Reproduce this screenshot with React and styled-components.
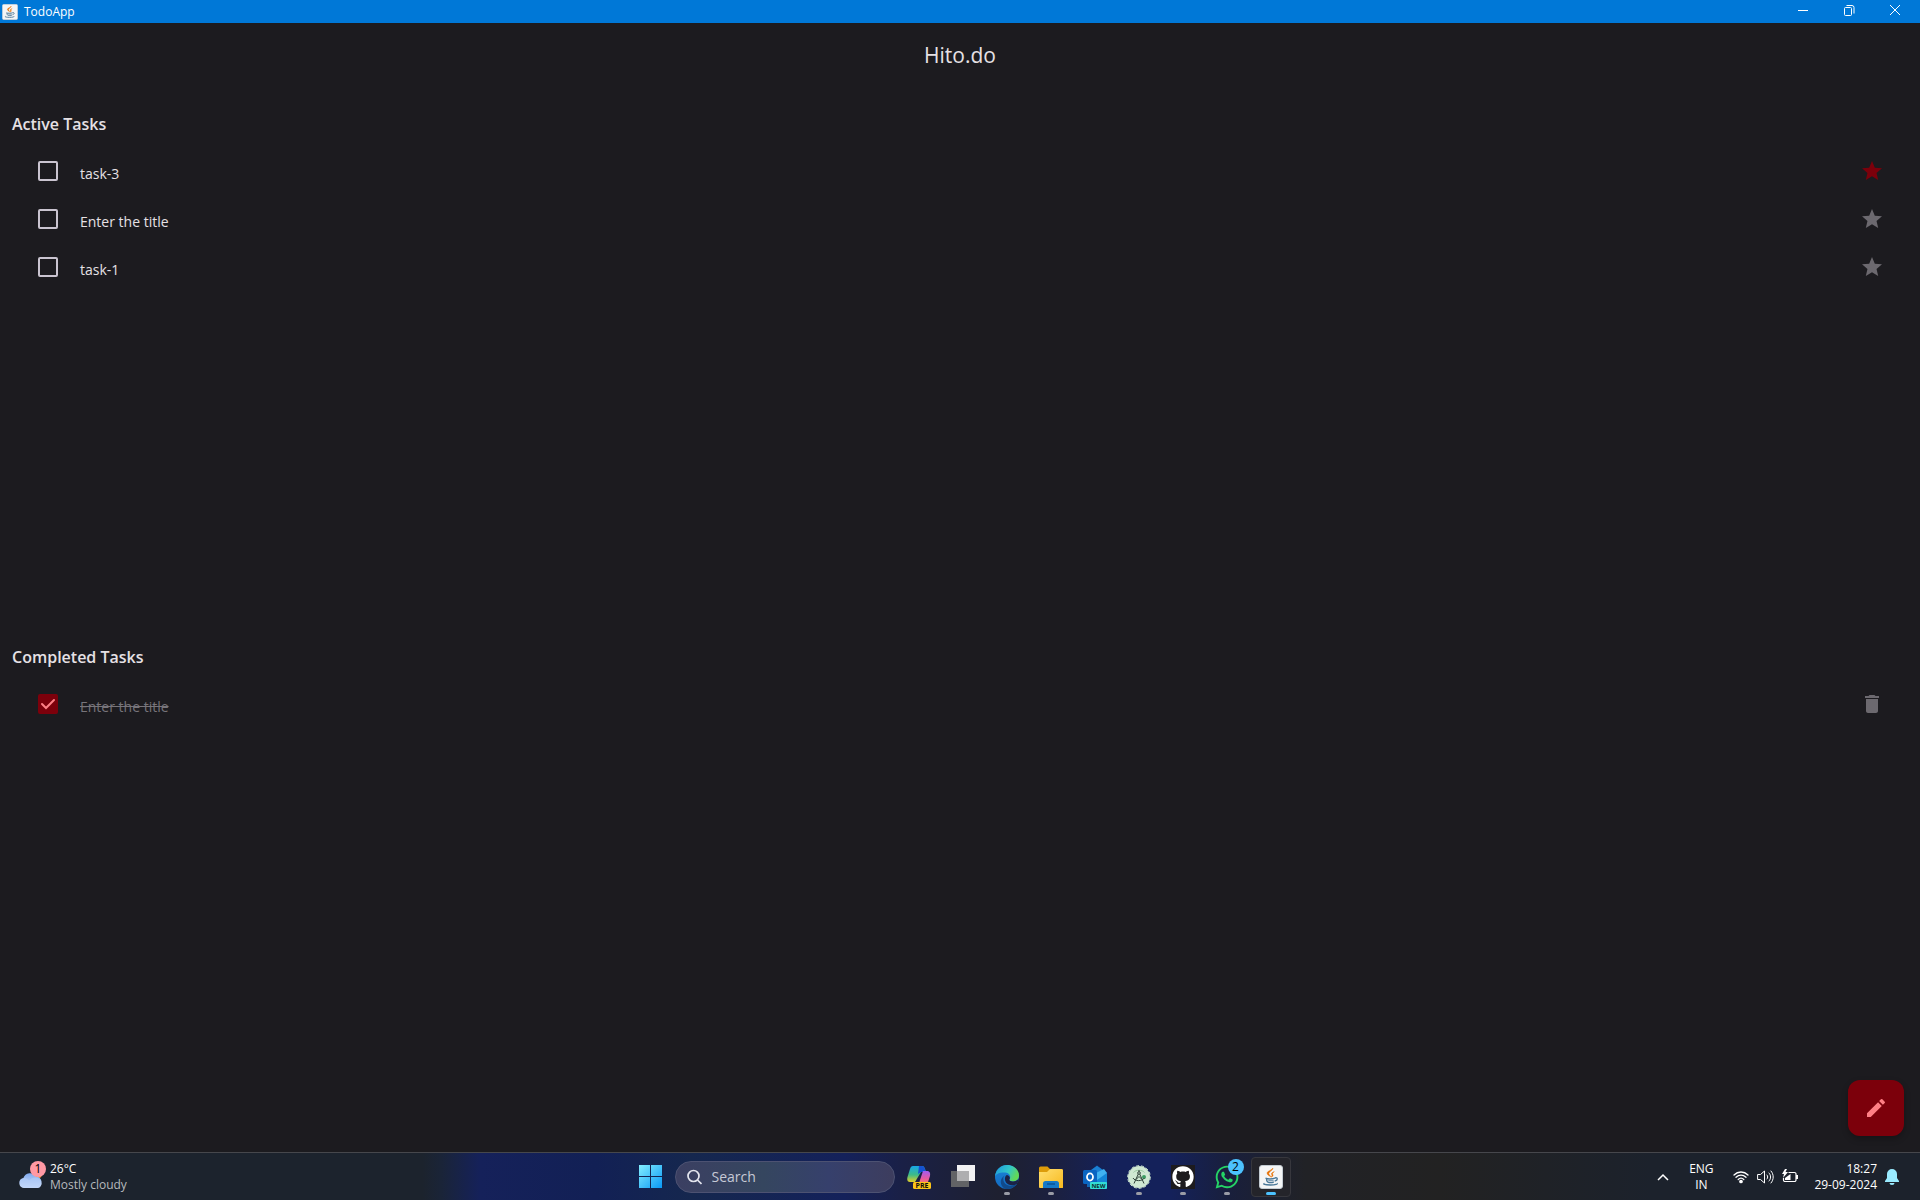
import { useState } from "react";
import styled, { createGlobalStyle } from "styled-components";
import { MdStar, MdDelete, MdEdit } from "react-icons/md";
import { FaGithub, FaWhatsapp } from "react-icons/fa";

const GlobalStyle = createGlobalStyle`
  * {
    box-sizing: border-box;
  }
  body {
    margin: 0;
    background: #1c1b1f;
    color: #e6e1e5;
    font-family: "Open Sans", "Noto Sans", sans-serif;
  }
  button {
    padding: 0;
    border: 0;
    background: none;
    color: inherit;
    font: inherit;
  }
  svg {
    display: block;
  }
`;
const Desktop = styled.div`
  min-height: 100vh;
  display: flex;
  flex-direction: column;
`;
const TitleBar = styled.header`
  height: 23px;
  padding: 0 2px;
  display: flex;
  align-items: center;
  background: #0078d7;
  color: white;
  font-size: 12px;
`;
const WindowName = styled.span`
  flex: 1;
  margin-left: 6px;
`;
const WindowButton = styled.button`
  width: 46px;
  height: 20px;
  display: flex;
  align-items: center;
  justify-content: center;
  align-self: flex-start;
`;
const AppBody = styled.main`
  position: relative;
  flex: 1;
  display: flex;
  flex-direction: column;
`;
const AppName = styled.h1`
  margin: 0;
  height: 64px;
  line-height: 64px;
  text-align: center;
  font-size: 21px;
  font-weight: 400;
`;
const Section = styled.section`
  flex: 1 1 0px;
`;
const SectionName = styled.h2`
  margin: 0;
  padding: 25px 12px 11px;
  font-size: 16px;
  line-height: 24px;
  font-weight: 600;
`;
const TaskList = styled.ul`
  margin: 0;
  padding: 0 24px;
  list-style: none;
`;
const TaskRow = styled.li`
  height: 48px;
  display: flex;
  align-items: center;
`;
const CheckArea = styled.span`
  width: 48px;
  height: 48px;
  display: grid;
  place-items: center;

  & > * {
    grid-area: 1 / 1;
  }
`;
const CheckBox = styled.input`
  appearance: none;
  width: 20px;
  height: 20px;
  margin: 0;
  border: 2px solid #cac4d0;
  border-radius: 2px;

  &:checked {
    border-color: #7c000b;
    background: #7c000b;
  }
`;
const CheckMark = styled.svg`
  pointer-events: none;
  z-index: 1;
`;
const TaskName = styled.label`
  flex: 1;
  padding: 6px 0 0 8px;
  font-size: 14px;
  line-height: 20px;
  color: ${(props) => (props.$done ? "#77747a" : "#e6e1e5")};
  text-decoration: ${(props) => (props.$done ? "line-through" : "none")};
`;
const IconButton = styled.button`
  width: 48px;
  height: 48px;
  display: grid;
  place-items: center;
  font-size: 24px;
  color: ${(props) => (props.$on ? "#7c000b" : "#6c696f")};
`;
const AddButton = styled.button`
  position: absolute;
  right: 16px;
  bottom: 16px;
  width: 56px;
  height: 56px;
  display: grid;
  place-items: center;
  border-radius: 12px;
  background: #7c000b;
  color: #ff7f85;
  font-size: 24px;
  box-shadow: 0 3px 6px rgba(0, 0, 0, 0.25);
`;

const TaskBar = styled.footer`
  height: 48px;
  display: grid;
  grid-template-columns: 1fr auto 1fr;
  align-items: center;
  border-top: 1px solid #46474c;
  background: linear-gradient(
    90deg,
    #1c232d 0%,
    #1c232d 22%,
    #1a2438 23%,
    #15215a 25%,
    #122055 31%,
    #15274e 36%,
    #14215a 44%,
    #1a2046 47%,
    #1e2030 52%,
    #1b2040 55%,
    #14215a 58%,
    #14215a 61%,
    #191f3c 64%,
    #212226 68%,
    #222222 75%,
    #1c222c 86%,
    #1c222c 100%
  );
`;
const Weather = styled.button`
  justify-self: start;
  margin-left: 16px;
  display: flex;
  gap: 2px;
  text-align: left;
  font-size: 12px;
  line-height: 16px;
`;
const WeatherText = styled.span`
  display: flex;
  flex-direction: column;
  color: white;

  small {
    font-size: 12px;
    color: #b6b9bd;
  }
`;
const Apps = styled.nav`
  display: flex;
  align-items: center;
`;
const AppButton = styled.button`
  position: relative;
  width: 44px;
  height: 47px;
  display: grid;
  place-items: center;
`;
const ActiveFrame = styled.span`
  width: 40px;
  height: 40px;
  display: grid;
  place-items: center;
  border: 1px solid #37373d;
  border-radius: 4px;
  background: #24242a;
`;
const Indicator = styled.span`
  position: absolute;
  bottom: 5px;
  left: 50%;
  width: ${(props) => (props.$active ? "10px" : "6px")};
  height: 3px;
  border-radius: 2px;
  background: ${(props) => (props.$active ? "#4cc2ff" : "#9a9ca6")};
  transform: translateX(-50%);
`;
const Badge = styled.span`
  position: absolute;
  top: 6px;
  right: 5px;
  width: 16px;
  height: 16px;
  border-radius: 50%;
  background: #4cc2ff;
  color: black;
  font-size: 12px;
  line-height: 16px;
  text-align: center;
`;
const GithubTile = styled.span`
  width: 24px;
  height: 24px;
  display: grid;
  place-items: center;
  background: #1d1b1e;
  color: white;
  font-size: 22px;
`;
const SearchBox = styled.label`
  width: 220px;
  height: 32px;
  margin: 0 2px 0 3px;
  padding: 0 11px;
  display: flex;
  align-items: center;
  gap: 10px;
  border: 1px solid #4d5272;
  border-radius: 16px;
  background: linear-gradient(90deg, #3b3f62, #35465f 40%, #36406c 70%, #3d3d5e);
`;
const SearchInput = styled.input`
  flex: 1;
  min-width: 0;
  padding: 0;
  border: 0;
  outline: 0;
  background: none;
  font: inherit;
  font-size: 14px;
  color: white;

  &::placeholder {
    color: #c6c9d6;
    opacity: 1;
  }
`;
const Tray = styled.div`
  justify-self: end;
  display: flex;
  align-items: center;
  padding-right: 21px;
  color: white;
  font-size: 12px;
  line-height: 16px;
`;
const Language = styled.button`
  width: 24px;
  margin: 0 20px;
  display: flex;
  flex-direction: column;
  align-items: center;
`;
const StatusIcons = styled.button`
  display: flex;
  align-items: center;
  gap: 8px;
`;
const Clock = styled.button`
  margin: 0 8px 0 16px;
  display: flex;
  flex-direction: column;
  align-items: flex-end;
`;

const JavaIcon = ({ size }) => (
  <svg width={size} height={size} viewBox="0 0 24 24" fill="none">
    <rect x=".5" y=".5" width="23" height="23" rx="2.5" fill="#f4f5f6" stroke="#c3cbd2" />
    <path d="M13.8 3c.8 2-4.5 3.700-4 5.800.2 1 1.500 1.700 2 3-1.800-1.200-4-2.200-3.700-4 .3-1.900 5.200-2.700 5.700-4.800z" fill="#e76f00" stroke="#e76f00" strokeWidth=".5" />
    <path d="M15.3 6.600c-2.500 1-3.300 1.900-2.600 3 .6.900.3 1.700-.6 2.600 2.300-1 2.200-2 1.500-3-.4-.7.3-1.500 1.700-2.600z" fill="#e76f00" stroke="#e76f00" strokeWidth=".5" />
    <path d="M6.500 13.200c2 .9 7 .9 9.500-.1M7.500 13.500c0 1.800.4 2.600 1 3.300 1.700.8 4.700.8 6.300 0M16 13c2.600-.9 3.500 2-.3 3.100M5.500 18.300c-1.800.9 0 1.600 6 1.700 5 0 7.500-.9 6.300-1.700" stroke="#4b7898" strokeWidth="1.4" />
    <path d="M9.300 15.200h5.300" stroke="#4b7898" />
  </svg>
);

const WeatherIcon = () => (
  <svg width="32" height="32" viewBox="0 0 32 32">
    <defs>
      <linearGradient id="cloud" x2="0" y2="1">
        <stop offset="0" stopColor="#7fa9ee" />
        <stop offset="1" stopColor="#d5e4fb" />
      </linearGradient>
    </defs>
    <circle cx="21" cy="13" r="5" fill="#f58a1f" />
    <path d="M8 27a5 5 0 0 1-.6-9.900A7 7 0 0 1 20 15.500 6 6 0 0 1 22 27z" fill="url(#cloud)" />
    <path d="M8 27a5 5 0 0 1 0-9.900c2.400 0 4 1 5 2.600 2-2.700 5-3.700 8-3 6 2 5 10.300 1 10.300z" fill="#b4cdf6" opacity=".6" />
    <circle cx="22" cy="8" r="8" fill="#ff99a4" />
    <text x="22" y="12" textAnchor="middle" fontSize="12" fill="#000">1</text>
  </svg>
);

const StartIcon = () => (
  <svg width="24" height="24" viewBox="0 0 24 24">
    <defs>
      <linearGradient id="start" x2="24" y2="24" gradientUnits="userSpaceOnUse">
        <stop stopColor="#86f0ff" />
        <stop offset="1" stopColor="#0796f5" />
      </linearGradient>
    </defs>
    <path d="M1 0h11v11H1zM13 0h11v11H13zM1 12h11v11H1zM13 12h11v11H13z" fill="url(#start)" />
  </svg>
);

const CopilotIcon = () => (
  <svg width="26" height="26" viewBox="0 0 26 26">
    <defs>
      <linearGradient id="copilotA" x2="0" y2="1">
        <stop stopColor="#18a7e8" />
        <stop offset=".55" stopColor="#3dbb87" />
        <stop offset="1" stopColor="#e4cf27" />
      </linearGradient>
      <linearGradient id="copilotB" x2="0" y2="1">
        <stop stopColor="#a35bf0" />
        <stop offset=".6" stopColor="#e85a9d" />
        <stop offset="1" stopColor="#ff8b5b" />
      </linearGradient>
    </defs>
    <path d="M7 2h9c2 0 2.500 1.500 3 3l1 3h-5L9 18H4c-3 0-3-3-2.500-5L4 5c.5-2 1.500-3 3-3z" fill="url(#copilotA)" />
    <path d="M13 2h3c2 0 2.500 1.500 3 3l1 3h-5l-3 2z" fill="#1552d0" />
    <path d="M17 7h4c3 0 3.500 2.500 3 5l-2 6c-.6 1.500-2 2-3 2h-8c2 0 2.500-2 3-4z" fill="url(#copilotB)" />
    <rect x="7" y="18" width="18" height="7" rx="1.500" fill="#fcc419" />
    <text x="16" y="24" textAnchor="middle" fontSize="7" fontWeight="700" fill="#15120a">PRE</text>
  </svg>
);

const TaskViewIcon = () => (
  <svg width="24" height="24" viewBox="0 0 24 24">
    <path d="M6 0h18v16H6z" fill="#f2f2f3" />
    <path d="M0 6h18v16H0z" fill="#626366" />
    <path d="M6 6h12v10H6z" fill="#aeaeb0" />
  </svg>
);

const EdgeIcon = () => (
  <svg width="24" height="24" viewBox="0 0 24 24">
    <defs>
      <linearGradient id="edgeA" x2="1" y2=".4">
        <stop stopColor="#1c96df" />
        <stop offset=".6" stopColor="#32c6c8" />
        <stop offset="1" stopColor="#62d957" />
      </linearGradient>
      <linearGradient id="edgeB" x2="0" y2="1">
        <stop stopColor="#1b86d8" />
        <stop offset="1" stopColor="#1269c0" />
      </linearGradient>
    </defs>
    <circle cx="12" cy="12" r="12" fill="url(#edgeB)" />
    <path d="M0 11.500C.8 4.500 6 0 12 0c7 0 12 5 12 10.500 0 4-3 6-6 6-2.500 0-4-1-3.500-2.200 1.500-2 .8-6.300-4-6.800C5.500 7 1 8.500 0 11.500z" fill="url(#edgeA)" />
    <path d="M8.300 13.500c-.3 5 4.700 8.200 9.700 6.900 1.500-.4 2.900-1.200 4-1.700-2.500 4-7 6-12 5-4.500-2-6.300-9-.8-13-.6.900-.9 1.800-.9 2.800z" fill="#114a8b" />
    <path d="M14.500 14.300c-.5 1.200 1 2.200 3.500 2.200 2 0 4-.8 5.300-2.600l.3 1.100c-.3 1.500-.8 2.600-1.600 3.700-5 3.300-12.500 1-12-5.200 0-1.500.5-3 2-3.500 2.500.5 3.500 2.800 2.500 4.300z" fill="#1b2346" />
  </svg>
);

const FolderIcon = () => (
  <svg width="24" height="24" viewBox="0 0 24 24">
    <defs>
      <linearGradient id="folder" x2="1" y2="1">
        <stop stopColor="#ffdf70" />
        <stop offset="1" stopColor="#f8b91e" />
      </linearGradient>
    </defs>
    <path d="M0 3q0-1.500 1.500-1.500h7L11 4h11.500Q24 4 24 5.500V10H0z" fill="#dd9c0a" />
    <path d="M0 7h8l3-3h11.500Q24 4 24 5.500v17q0 .5-1 .5H1q-1 0-1-1z" fill="url(#folder)" />
    <path d="M4 23v-4.500Q4 16 6.500 16h11q2.500 0 2.500 2.500V23z" fill="#1679c7" />
    <path d="M8 19h8" stroke="#0c5495" strokeWidth="1.500" />
  </svg>
);

const OutlookIcon = () => (
  <svg width="24" height="24" viewBox="0 0 24 24">
    <path d="M4 8 14 .5 24 8v14H4z" fill="#1267b8" />
    <path d="M7 6l7-5 7 5v10H7z" fill="#1b80d4" />
    <path d="m24 8-12 8v6h12z" fill="#1385d6" />
    <path d="m13 8 8-4 3 4-10 7z" fill="#3fb2f0" />
    <rect y="5" width="14" height="14" rx="1.500" fill="#0a65c2" />
    <ellipse cx="7" cy="12" rx="3" ry="3.600" fill="none" stroke="#fff" strokeWidth="1.800" />
    <rect x="7" y="17" width="17" height="7" rx="1" fill="#32dcd6" />
    <text x="15.500" y="23" textAnchor="middle" fontSize="6" fontWeight="700" fill="#0b3130">NEW</text>
  </svg>
);

const StudioIcon = () => (
  <svg width="24" height="24" viewBox="0 0 24 24" fill="none">
    <circle cx="12" cy="12" r="11" fill="#cfe8d3" />
    <circle cx="12" cy="12" r="11.300" stroke="#cfe8d3" strokeDasharray="3 2" />
    <path d="M6.500 7.500c2-3 9-3 11 0" stroke="#9ccaa5" />
    <circle cx="17" cy="12" r="2" fill="#3b9b61" />
    <path d="M12 5v2M11.300 9 7 18.500M12.700 9 17 18.500M6 13c2 3.500 9 3.500 11.500 0M9 14.500l3-3 3 3" stroke="#30433a" />
    <circle cx="12" cy="8" r="1.300" fill="#cfe8d3" stroke="#30433a" />
  </svg>
);

const WifiIcon = () => (
  <svg width="16" height="16" viewBox="0 0 16 16" fill="none" stroke="currentColor" strokeWidth="1.300" strokeLinecap="round">
    <path d="M1 6c4-4 10-4 14 0M3 8.300c3-3 7-3 10 0M5.200 10.500c1.700-1.600 3.900-1.600 5.600 0" />
    <circle cx="8" cy="12.500" r="1.200" fill="currentColor" />
  </svg>
);

const SpeakerIcon = () => (
  <svg width="17" height="16" viewBox="0 0 17 16" fill="none" stroke="currentColor" strokeLinecap="round" strokeLinejoin="round">
    <path d="M1 5.500h2.500L7.500 2v12l-4-3.500H1zM10 6c1 1 1 3 0 4M12 4c2.200 2.200 2.200 5.800 0 8M14 2c3 3.500 3 8.500 0 12" />
  </svg>
);

const BatteryIcon = () => (
  <svg width="16" height="16" viewBox="0 0 16 16" fill="none">
    <path d="M6.500 3.500h6A1.500 1.500 0 0 1 14 5v6a1.500 1.500 0 0 1-1.500 1.500H3A1.500 1.500 0 0 1 1.500 11V9" stroke="currentColor" strokeWidth="1.200" />
    <path d="M3 9l5.500-4v6H3zM14 6h2v4h-2zM3 0 0 5h2L1 9l5-6H3.500L5 0z" fill="currentColor" />
  </svg>
);

const activeTasks = [
  { id: 3, title: "task-3", starred: true },
  { id: 2, title: "Enter the title" },
  { id: 1, title: "task-1" },
];
const completedTasks = [{ id: 4, title: "Enter the title" }];

const Task = ({ task, completed }) => {
  const [checked, setChecked] = useState(Boolean(completed));
  const [starred, setStarred] = useState(Boolean(task.starred));
  const id = `task-${task.id}`;

  return (
    <TaskRow>
      <CheckArea>
        <CheckBox
          id={id}
          type="checkbox"
          checked={checked}
          onChange={() => setChecked(!checked)}
        />
        {checked && (
          <CheckMark width="20" height="20" viewBox="0 0 20 20" fill="none">
            <path d="m4 10 4 4 8-8" stroke="#ff7f85" strokeWidth="2" strokeLinecap="round" />
          </CheckMark>
        )}
      </CheckArea>
      <TaskName htmlFor={id} $done={checked}>
        {task.title}
      </TaskName>
      {completed ? (
        <IconButton aria-label="Delete task">
          <MdDelete />
        </IconButton>
      ) : (
        <IconButton
          aria-label="Star task"
          $on={starred}
          onClick={() => setStarred(!starred)}
        >
          <MdStar />
        </IconButton>
      )}
    </TaskRow>
  );
};

const App = () => {
  return (
    <Desktop>
      <GlobalStyle />
      <TitleBar>
        <JavaIcon size={16} />
        <WindowName>TodoApp</WindowName>
        <WindowButton aria-label="Minimize">
          <svg width="10" height="10" stroke="currentColor">
            <path d="M0 5.500h10" />
          </svg>
        </WindowButton>
        <WindowButton aria-label="Restore">
          <svg width="11" height="11" fill="none" stroke="currentColor">
            <rect x=".5" y="2.500" width="7" height="8" rx="1" />
            <path d="M2.500.5h5.500q2 0 2 2v6" />
          </svg>
        </WindowButton>
        <WindowButton aria-label="Close">
          <svg width="10" height="10" stroke="currentColor">
            <path d="m0 0 10 10M10 0 0 10" />
          </svg>
        </WindowButton>
      </TitleBar>

      <AppBody>
        <AppName>Hito.do</AppName>
        <Section>
          <SectionName>Active Tasks</SectionName>
          <TaskList>
            {activeTasks.map((task) => (
              <Task key={task.id} task={task} />
            ))}
          </TaskList>
        </Section>
        <Section>
          <SectionName>Completed Tasks</SectionName>
          <TaskList>
            {completedTasks.map((task) => (
              <Task key={task.id} task={task} completed />
            ))}
          </TaskList>
        </Section>
        <AddButton aria-label="Add task">
          <MdEdit />
        </AddButton>
      </AppBody>

      <TaskBar>
        <Weather>
          <WeatherIcon />
          <WeatherText>
            26°C
            <small>Mostly cloudy</small>
          </WeatherText>
        </Weather>
        <Apps>
          <AppButton aria-label="Start">
            <StartIcon />
          </AppButton>
          <SearchBox>
            <svg width="15" height="16" viewBox="0 0 15 16" fill="none" stroke="#e4e5ee" strokeWidth="1.700">
              <circle cx="6.500" cy="7" r="5.500" />
              <path d="m10.500 11 4 4" />
            </svg>
            <SearchInput placeholder="Search" aria-label="Search" />
          </SearchBox>
          <AppButton aria-label="Copilot">
            <CopilotIcon />
          </AppButton>
          <AppButton aria-label="Task view">
            <TaskViewIcon />
          </AppButton>
          <AppButton aria-label="Edge">
            <EdgeIcon />
            <Indicator />
          </AppButton>
          <AppButton aria-label="File Explorer">
            <FolderIcon />
            <Indicator />
          </AppButton>
          <AppButton aria-label="Outlook">
            <OutlookIcon />
          </AppButton>
          <AppButton aria-label="Android Studio">
            <StudioIcon />
            <Indicator />
          </AppButton>
          <AppButton aria-label="GitHub">
            <GithubTile>
              <FaGithub />
            </GithubTile>
            <Indicator />
          </AppButton>
          <AppButton aria-label="WhatsApp">
            <FaWhatsapp size={26} color="#25d366" />
            <Badge>2</Badge>
            <Indicator />
          </AppButton>
          <AppButton aria-label="TodoApp">
            <ActiveFrame>
              <JavaIcon size={24} />
            </ActiveFrame>
            <Indicator $active />
          </AppButton>
        </Apps>
        <Tray>
          <button aria-label="Show hidden icons">
            <svg width="12" height="8" fill="none" stroke="currentColor" strokeWidth="1.500">
              <path d="m1 7 5-5 5 5" />
            </svg>
          </button>
          <Language>
            <span>ENG</span>
            <span>IN</span>
          </Language>
          <StatusIcons aria-label="Network, volume and battery">
            <WifiIcon />
            <SpeakerIcon />
            <BatteryIcon />
          </StatusIcons>
          <Clock>
            <span>18:27</span>
            <span>29-09-2024</span>
          </Clock>
          <button aria-label="Notifications">
            <svg width="14" height="16" viewBox="0 0 14 16" fill="#99ebff">
              <path d="M7 0a5 5 0 0 1 5 5v4l2 3v1H0v-1l2-3V5a5 5 0 0 1 5-5zM4.500 14h5a2.500 2 0 0 1-5 0z" />
            </svg>
          </button>
        </Tray>
      </TaskBar>
    </Desktop>
  );
};

export default App;
